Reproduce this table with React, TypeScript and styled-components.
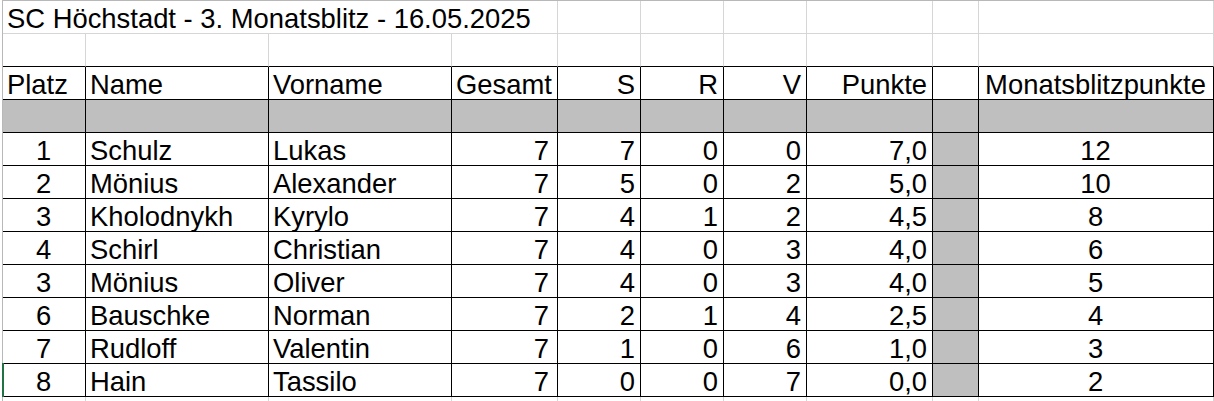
import React from "react";
import styled, { createGlobalStyle } from "styled-components";

const GRID = "#d6d6d6";
const EDGE = "#b8b8b8";
const INK = "#000000";
const SHADE = "#bfbfbf";

const Global = createGlobalStyle`
  html, body {
    margin: 0;
    padding: 0;
    background: #ffffff;
    overflow: hidden;
    height: 100%;
  }
  body {
    font-family: "Liberation Sans", Arial, sans-serif;
  }
`;

const Viewport = styled.div`
  height: 401px;
  overflow: hidden;
`;

const Sheet = styled.div`
  margin-left: 2px;
  display: grid;
  grid-template-columns: 83px 183px 183px 106px 83px 83px 83px 126px 46px 235px;
  grid-auto-rows: 33px;
  border-left: 1px solid ${EDGE};
  border-top: 1px solid ${EDGE};
  font-family: "Liberation Sans", Arial, sans-serif;
  font-size: 27.4px;
  color: ${INK};
`;

type Align = "left" | "right" | "center";

const Cell = styled.div<{
  $align?: Align;
  $fill?: string;
  $right: string;
  $bottom: string;
  $span?: number;
  $padR?: number;
  $marked?: boolean;
}>`
  position: relative;
  box-sizing: border-box;
  height: 33px;
  grid-column: span ${(p) => p.$span ?? 1};
  border-right: 1px solid ${(p) => p.$right};
  border-bottom: 1px solid ${(p) => p.$bottom};
  background: ${(p) => p.$fill ?? "#ffffff"};
  text-align: ${(p) => p.$align ?? "left"};
  padding: 1px ${(p) => p.$padR ?? 5}px 0 4px;
  line-height: 33px;
  white-space: nowrap;
  ${(p) =>
    p.$marked
      ? `
  &::before {
    content: "";
    position: absolute;
    left: -1px;
    top: -1px;
    bottom: -1px;
    width: 2px;
    background: #217346;
  }`
      : ""}
`;

type Row = [string, string, string, string, string, string, string, string, string];

const rows: Row[] = [
  ["1", "Schulz", "Lukas", "7", "7", "0", "0", "7,0", "12"],
  ["2", "Mönius", "Alexander", "7", "5", "0", "2", "5,0", "10"],
  ["3", "Kholodnykh", "Kyrylo", "7", "4", "1", "2", "4,5", "8"],
  ["4", "Schirl", "Christian", "7", "4", "0", "3", "4,0", "6"],
  ["3", "Mönius", "Oliver", "7", "4", "0", "3", "4,0", "5"],
  ["6", "Bauschke", "Norman", "7", "2", "1", "4", "2,5", "4"],
  ["7", "Rudloff", "Valentin", "7", "1", "0", "6", "1,0", "3"],
  ["8", "Hain", "Tassilo", "7", "0", "0", "7", "0,0", "2"],
];

const headers: { label: string; align: Align }[] = [
  { label: "Platz", align: "left" },
  { label: "Name", align: "left" },
  { label: "Vorname", align: "left" },
  { label: "Gesamt", align: "left" },
  { label: "S", align: "right" },
  { label: "R", align: "right" },
  { label: "V", align: "right" },
  { label: "Punkte", align: "right" },
  { label: "", align: "left" },
  { label: "Monatsblitzpunkte", align: "center" },
];

const TEN = Array.from({ length: 10 }, (_, i) => i);

export default function App() {
  return (
    <Viewport>
      <Global />
      <Sheet>
        {/* Title row */}
        <Cell $span={4} $right={GRID} $bottom={GRID}>
          SC Höchstadt - 3. Monatsblitz - 16.05.2025
        </Cell>
        {TEN.slice(4).map((i) => (
          <Cell key={`t${i}`} $right={GRID} $bottom={GRID} />
        ))}

        {/* Empty row */}
        {TEN.map((i) => (
          <Cell key={`e${i}`} $right={GRID} $bottom={INK} />
        ))}

        {/* Header row */}
        {headers.map((h, i) => (
          <Cell key={`h${i}`} $align={h.align} $right={INK} $bottom={INK}>
            {h.label}
          </Cell>
        ))}

        {/* Shaded row */}
        {TEN.map((i) => (
          <Cell key={`s${i}`} $fill={SHADE} $right={INK} $bottom={INK} />
        ))}

        {/* Data rows */}
        {rows.map((r, ri) => (
          <React.Fragment key={`r${ri}`}>
            <Cell $align="center" $right={INK} $bottom={INK} $marked={ri === rows.length - 1}>
              {r[0]}
            </Cell>
            <Cell $right={INK} $bottom={INK}>{r[1]}</Cell>
            <Cell $right={INK} $bottom={INK}>{r[2]}</Cell>
            <Cell $align="right" $padR={8} $right={INK} $bottom={INK}>{r[3]}</Cell>
            <Cell $align="right" $right={INK} $bottom={INK}>{r[4]}</Cell>
            <Cell $align="right" $right={INK} $bottom={INK}>{r[5]}</Cell>
            <Cell $align="right" $right={INK} $bottom={INK}>{r[6]}</Cell>
            <Cell $align="right" $right={INK} $bottom={INK}>{r[7]}</Cell>
            <Cell $fill={SHADE} $right={INK} $bottom={INK} />
            <Cell $align="center" $right={INK} $bottom={INK}>{r[8]}</Cell>
          </React.Fragment>
        ))}

        {/* Trailing empty row */}
        {TEN.map((i) => (
          <Cell key={`x${i}`} $right={GRID} $bottom={GRID} />
        ))}
      </Sheet>
    </Viewport>
  );
}
